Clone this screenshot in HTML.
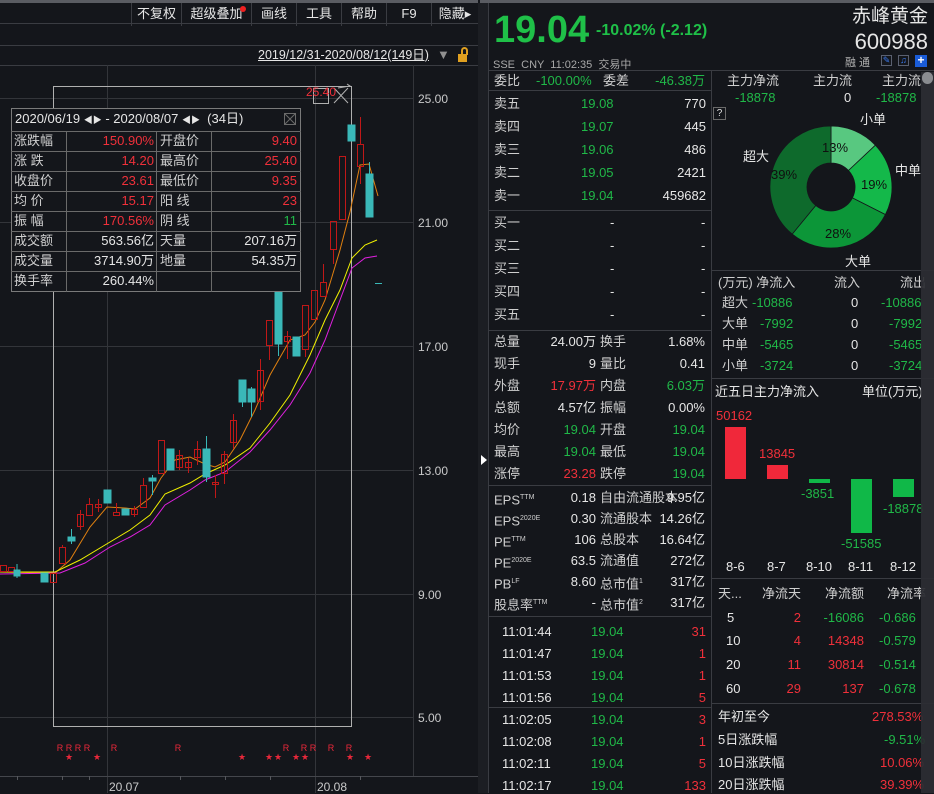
<!DOCTYPE html>
<html><head><meta charset="utf-8"><style>
*{margin:0;padding:0;box-sizing:border-box}
body{width:934px;height:793px;background:#14161b;overflow:hidden;position:relative;font-family:"Liberation Sans","Noto Sans CJK SC",sans-serif;font-size:13px;color:#dcdcdc}
.t{position:absolute;white-space:nowrap;line-height:16px}
.r{text-align:right}
.g{color:#20b848}.d{color:#f0303a}.w{color:#e6e6e6}.l{color:#cfcfcf}
.hl{position:absolute;height:1px;background:#3a3c42}
.vl{position:absolute;width:1px;background:#3a3c42}
.tb{position:absolute;top:4px;height:23px;border-left:1px solid #3a3c42;color:#e6e6e6;font-size:13px;line-height:22px;text-align:center}
</style></head><body>
<div style="position:absolute;left:0;top:0;width:478px;height:3px;background:#5a5c62"></div>
<div style="position:absolute;left:480px;top:0;width:454px;height:3px;background:#5a5c62"></div>
<div class="tb" style="left:131px;width:50px;top:3px">不复权</div>
<div class="tb" style="left:181px;width:70px;top:3px">超级叠加<span style="position:absolute;right:5px;top:3px;width:6px;height:6px;border-radius:3px;background:#f02020"></span></div>
<div class="tb" style="left:251px;width:45px;top:3px">画线</div>
<div class="tb" style="left:296px;width:45px;top:3px">工具</div>
<div class="tb" style="left:341px;width:45px;top:3px">帮助</div>
<div class="tb" style="left:386px;width:45px;top:3px">F9</div>
<div class="tb" style="left:431px;width:47px;top:3px">隐藏▸</div>
<div class="hl" style="left:0;top:23px;width:478px"></div>
<div class="hl" style="left:0;top:45px;width:478px"></div>
<div class="hl" style="left:0;top:65px;width:478px"></div>
<div class="t w" style="left:258px;top:47px;font-size:12.5px;text-decoration:underline">2019/12/31-2020/08/12(149日)</div>
<div class="t" style="left:437px;top:47px;color:#909090">▼</div>
<div style="position:absolute;left:458px;top:54px;width:9px;height:8px;background:#e0a020"></div>
<div style="position:absolute;left:461px;top:47px;width:7px;height:8px;border:2px solid #e0a020;border-bottom:none;border-radius:4px 4px 0 0"></div>
<svg style="position:absolute;left:0;top:0" width="488" height="793">
<g stroke="#33353a" stroke-width="1">
<line x1="0" y1="98.5" x2="413" y2="98.5"/><line x1="0" y1="222.5" x2="413" y2="222.5"/>
<line x1="0" y1="346.5" x2="413" y2="346.5"/><line x1="0" y1="470.5" x2="413" y2="470.5"/>
<line x1="0" y1="594.5" x2="413" y2="594.5"/><line x1="0" y1="717.5" x2="413" y2="717.5"/>
<line x1="107.5" y1="65" x2="107.5" y2="793"/><line x1="315.5" y1="65" x2="315.5" y2="793"/>
<line x1="413.5" y1="65" x2="413.5" y2="776"/>
</g>
<line x1="0" y1="776.5" x2="478" y2="776.5" stroke="#44464c"/>
<g stroke="#55575c"><line x1="17.5" y1="776" x2="17.5" y2="780"/><line x1="62.5" y1="776" x2="62.5" y2="780"/><line x1="89.5" y1="776" x2="89.5" y2="780"/><line x1="180.5" y1="776" x2="180.5" y2="780"/><line x1="225.5" y1="776" x2="225.5" y2="780"/><line x1="270.5" y1="776" x2="270.5" y2="780"/><line x1="360.5" y1="776" x2="360.5" y2="780"/></g>
<rect x="478" y="3" width="10" height="790" fill="#1c1e23"/>
<polygon points="481,455 487,460 481,465" fill="#ffffff"/>
<rect x="53.5" y="86.5" width="298" height="640" fill="none" stroke="#b0b0b0"/>
<rect x="313.5" y="88.5" width="15" height="15" fill="none" stroke="#b0b0b0"/>
<path d="M334 88 L348 103 M348 88 L334 103 M338 88 L350 86 L347 84" stroke="#b0b0b0" fill="none"/>
<text x="306" y="96" fill="#f0303a" font-size="12" font-family="Liberation Sans">25.40</text>
<polyline fill="none" stroke="#e08010" stroke-width="1" points="0,572 55,573 70,560 90,527 107,507 125,508 135,509 150,498 161,478 175,460 190,457 205,464 215,467 225,462 240,440 255,410 270,375 290,340 305,335 315,322 325,300 340,250 350,212 360,165 369,164 378,196"/>
<polyline fill="none" stroke="#f0f000" stroke-width="1" points="0,572 55,572 80,560 110,542 130,530 150,515 165,494 190,483 205,474 225,465 250,448 270,423 290,395 310,355 325,320 340,290 352,258 365,245 377,240"/>
<polyline fill="none" stroke="#e020e0" stroke-width="1" points="0,574 60,573 85,563 110,547 130,537 150,525 165,505 190,490 205,480 225,472 250,452 270,430 290,405 310,373 325,340 340,300 352,268 365,258 377,256"/>
<g stroke="#c01818" fill="none">
<rect x="0.5" y="565.5" width="6" height="6"/><rect x="8.5" y="567.5" width="6" height="4"/>
<rect x="50.5" y="573.5" width="6" height="9"/>
<rect x="59.5" y="547.5" width="6" height="16"/><line x1="62.5" y1="545" x2="62.5" y2="547"/>
<rect x="77.5" y="514.5" width="6" height="12"/><line x1="80.5" y1="510" x2="80.5" y2="530"/>
<rect x="86.5" y="504.5" width="6" height="11"/><line x1="89.5" y1="498" x2="89.5" y2="504"/>
<rect x="95.5" y="504.5" width="6" height="3"/><line x1="98.5" y1="499" x2="98.5" y2="512"/>
<rect x="113.5" y="512.5" width="6" height="3"/><line x1="116.5" y1="503" x2="116.5" y2="512"/>
<rect x="131.5" y="509.5" width="6" height="5"/><line x1="134.5" y1="506" x2="134.5" y2="517"/>
<rect x="140.5" y="485.5" width="6" height="22"/><line x1="143.5" y1="478" x2="143.5" y2="485"/>
<rect x="158.5" y="440.5" width="6" height="33"/>
<rect x="176.5" y="455.5" width="6" height="12"/><line x1="179.5" y1="450" x2="179.5" y2="470"/>
<rect x="185.5" y="462.5" width="6" height="5"/><line x1="188.5" y1="458" x2="188.5" y2="473"/>
<rect x="194.5" y="449.5" width="6" height="8"/><line x1="197.5" y1="441" x2="197.5" y2="465"/>
<rect x="212.5" y="482.5" width="6" height="2"/><line x1="215.5" y1="475" x2="215.5" y2="498"/>
<rect x="221.5" y="454.5" width="6" height="19"/><line x1="224.5" y1="451" x2="224.5" y2="484"/>
<rect x="230.5" y="420.5" width="6" height="22"/><line x1="233.5" y1="414" x2="233.5" y2="449"/>
<rect x="257.5" y="370.5" width="6" height="31"/><line x1="260.5" y1="359" x2="260.5" y2="410"/>
<rect x="266.5" y="320.5" width="6" height="25"/><line x1="269.5" y1="345" x2="269.5" y2="360"/>
<rect x="284.5" y="336.5" width="6" height="5"/><line x1="287.5" y1="331" x2="287.5" y2="359"/>
<rect x="302.5" y="305.5" width="6" height="44"/><line x1="305.5" y1="349" x2="305.5" y2="357"/>
<rect x="311.5" y="290.5" width="6" height="29"/>
<rect x="320.5" y="282.5" width="6" height="14"/><line x1="323.5" y1="264" x2="323.5" y2="282"/>
<rect x="330.5" y="221.5" width="6" height="28"/><line x1="333.5" y1="249" x2="333.5" y2="264"/>
<rect x="339.5" y="156.5" width="6" height="63"/>
<rect x="357.5" y="144.5" width="6" height="22"/><line x1="360.5" y1="117" x2="360.5" y2="144"/><line x1="360.5" y1="166" x2="360.5" y2="184"/>
</g>
<g fill="#3ab8b8" stroke="#3ab8b8">
<rect x="14" y="570" width="6" height="6"/><line x1="17" y1="564" x2="17" y2="578"/>
<rect x="41" y="573" width="7" height="9"/>
<rect x="68" y="537" width="7" height="4"/><line x1="71.5" y1="529" x2="71.5" y2="544"/>
<rect x="104" y="490" width="7" height="13"/>
<rect x="122" y="509" width="7" height="6"/>
<rect x="149" y="478" width="7" height="3"/><line x1="152.5" y1="475" x2="152.5" y2="495"/>
<rect x="167" y="449" width="7" height="21"/>
<rect x="203" y="449" width="7" height="28"/><line x1="206.5" y1="436" x2="206.5" y2="482"/>
<rect x="239" y="380" width="7" height="22"/><line x1="242.5" y1="402" x2="242.5" y2="407"/>
<rect x="248" y="389" width="7" height="13"/><line x1="251.5" y1="387" x2="251.5" y2="417"/>
<rect x="275" y="292" width="7" height="52"/><line x1="278.5" y1="344" x2="278.5" y2="356"/>
<rect x="293" y="337" width="7" height="19"/>
<rect x="348" y="125" width="7" height="16"/>
<rect x="366" y="174" width="7" height="43"/><line x1="369.5" y1="162" x2="369.5" y2="174"/>
<line x1="375" y1="283.5" x2="382" y2="283.5"/>
</g>
<g fill="#e8e8e8" font-size="12" font-family="Liberation Sans" fill-opacity="0.85">
<text x="418" y="103">25.00</text><text x="418" y="227">21.00</text><text x="418" y="351">17.00</text>
<text x="418" y="475">13.00</text><text x="418" y="599">9.00</text><text x="418" y="722">5.00</text>
<text x="109" y="791">20.07</text><text x="317" y="791">20.08</text>
</g>
<g fill="#e8283a" font-size="9" font-family="Liberation Sans" text-anchor="middle">
<text x="60" y="751">R</text><text x="69" y="751">R</text><text x="78" y="751">R</text><text x="87" y="751">R</text><text x="114" y="751">R</text><text x="178" y="751">R</text><text x="286" y="751">R</text><text x="304" y="751">R</text><text x="313" y="751">R</text><text x="331" y="751">R</text><text x="349" y="751">R</text>
<text x="69" y="760">★</text><text x="97" y="760">★</text><text x="242" y="760">★</text><text x="269" y="760">★</text><text x="278" y="760">★</text><text x="296" y="760">★</text><text x="305" y="760">★</text><text x="350" y="760">★</text><text x="368" y="760">★</text>
</g>
</svg>
<div style="position:absolute;left:11px;top:108px;width:290px;height:184px;background:#14161b;border:1px solid #7a7a7a"></div>
<svg style="position:absolute;left:11px;top:108px" width="290" height="184"><g stroke="#6a6a6a">
<line x1="0" y1="23.5" x2="290" y2="23.5"/><line x1="0" y1="43.5" x2="290" y2="43.5"/><line x1="0" y1="63.5" x2="290" y2="63.5"/><line x1="0" y1="83.5" x2="290" y2="83.5"/><line x1="0" y1="103.5" x2="290" y2="103.5"/><line x1="0" y1="123.5" x2="290" y2="123.5"/><line x1="0" y1="143.5" x2="290" y2="143.5"/><line x1="0" y1="163.5" x2="290" y2="163.5"/>
<line x1="55.5" y1="23" x2="55.5" y2="184"/><line x1="145.5" y1="23" x2="145.5" y2="184"/><line x1="200.5" y1="23" x2="200.5" y2="184"/>
<rect x="273.5" y="5.5" width="11" height="11" fill="none"/><path d="M274 6 L284 16 M284 6 L274 16"/></g></svg>
<div class="t w" style="left:15px;top:111px">2020/06/19 <span style="font-size:9px">◀▶</span> - 2020/08/07 <span style="font-size:9px">◀▶</span> &nbsp;(34日)</div>
<div class="t l" style="left:14px;top:133px">涨跌幅</div><div class="t r d" style="right:780px;top:133px">150.90%</div><div class="t l" style="left:160px;top:133px">开盘价</div><div class="t r d" style="right:637px;top:133px">9.40</div>
<div class="t l" style="left:14px;top:153px">涨 跌</div><div class="t r d" style="right:780px;top:153px">14.20</div><div class="t l" style="left:160px;top:153px">最高价</div><div class="t r d" style="right:637px;top:153px">25.40</div>
<div class="t l" style="left:14px;top:173px">收盘价</div><div class="t r d" style="right:780px;top:173px">23.61</div><div class="t l" style="left:160px;top:173px">最低价</div><div class="t r d" style="right:637px;top:173px">9.35</div>
<div class="t l" style="left:14px;top:193px">均 价</div><div class="t r d" style="right:780px;top:193px">15.17</div><div class="t l" style="left:160px;top:193px">阳 线</div><div class="t r d" style="right:637px;top:193px">23</div>
<div class="t l" style="left:14px;top:213px">振 幅</div><div class="t r d" style="right:780px;top:213px">170.56%</div><div class="t l" style="left:160px;top:213px">阴 线</div><div class="t r g" style="right:637px;top:213px">11</div>
<div class="t l" style="left:14px;top:233px">成交额</div><div class="t r w" style="right:780px;top:233px">563.56亿</div><div class="t l" style="left:160px;top:233px">天量</div><div class="t r w" style="right:637px;top:233px">207.16万</div>
<div class="t l" style="left:14px;top:253px">成交量</div><div class="t r w" style="right:780px;top:253px">3714.90万</div><div class="t l" style="left:160px;top:253px">地量</div><div class="t r w" style="right:637px;top:253px">54.35万</div>
<div class="t l" style="left:14px;top:273px">换手率</div><div class="t r w" style="right:780px;top:273px">260.44%</div>

<div class="vl" style="left:488px;top:3px;height:790px"></div>
<div class="t g" style="left:494px;top:10px;font-size:38px;line-height:40px;font-weight:bold;color:#1fc048">19.04</div>
<div class="t g" style="left:596px;top:23px;font-size:16px;font-weight:bold;color:#1fc048">-10.02% (-2.12)</div>
<div class="t w" style="right:6px;top:6px;font-size:19px;line-height:22px">赤峰黄金</div>
<div class="t w" style="right:6px;top:30px;font-size:22px;line-height:24px">600988</div>
<div class="t" style="left:493px;top:57px;font-size:11px;color:#a8a8a8">SSE &nbsp;CNY &nbsp;11:02:35 &nbsp;交易中</div>
<div class="t" style="left:845px;top:55px;font-size:11px;color:#b0b0b0">融 通</div>
<div style="position:absolute;left:881px;top:55px;width:11px;height:11px;border:1px solid #5a6070;color:#3a7af0;font-size:9px;line-height:9px;text-align:center">✎</div>
<div style="position:absolute;left:898px;top:55px;width:11px;height:11px;border:1px solid #5a6070;color:#3a7af0;font-size:9px;line-height:9px;text-align:center">♫</div>
<div style="position:absolute;left:915px;top:55px;width:12px;height:12px;background:#1a5cd8;color:#fff;font-size:12px;line-height:11px;text-align:center;font-weight:bold">+</div>
<div class="hl" style="left:488px;top:70px;width:446px"></div>
<div class="vl" style="left:711px;top:70px;height:723px"></div>

<div class="t l" style="left:494px;top:73px">委比</div><div class="t g" style="left:536px;top:73px">-100.00%</div><div class="t l" style="left:603px;top:73px">委差</div><div class="t r g" style="right:229px;top:73px">-46.38万</div>
<div class="hl" style="left:488px;top:90px;width:223px"></div>
<div class="t l" style="left:494px;top:96px">卖五</div><div class="t g" style="left:581px;top:96px">19.08</div><div class="t r w" style="right:228px;top:96px">770</div>
<div class="t l" style="left:494px;top:119px">卖四</div><div class="t g" style="left:581px;top:119px">19.07</div><div class="t r w" style="right:228px;top:119px">445</div>
<div class="t l" style="left:494px;top:142px">卖三</div><div class="t g" style="left:581px;top:142px">19.06</div><div class="t r w" style="right:228px;top:142px">486</div>
<div class="t l" style="left:494px;top:165px">卖二</div><div class="t g" style="left:581px;top:165px">19.05</div><div class="t r w" style="right:228px;top:165px">2421</div>
<div class="t l" style="left:494px;top:188px">卖一</div><div class="t g" style="left:581px;top:188px">19.04</div><div class="t r w" style="right:228px;top:188px">459682</div>
<div class="hl" style="left:488px;top:210px;width:223px"></div>
<div class="t l" style="left:494px;top:215px">买一</div><div class="t w" style="left:610px;top:215px">-</div><div class="t w" style="left:701px;top:215px">-</div>
<div class="t l" style="left:494px;top:238px">买二</div><div class="t w" style="left:610px;top:238px">-</div><div class="t w" style="left:701px;top:238px">-</div>
<div class="t l" style="left:494px;top:261px">买三</div><div class="t w" style="left:610px;top:261px">-</div><div class="t w" style="left:701px;top:261px">-</div>
<div class="t l" style="left:494px;top:284px">买四</div><div class="t w" style="left:610px;top:284px">-</div><div class="t w" style="left:701px;top:284px">-</div>
<div class="t l" style="left:494px;top:307px">买五</div><div class="t w" style="left:610px;top:307px">-</div><div class="t w" style="left:701px;top:307px">-</div>
<div class="hl" style="left:488px;top:330px;width:223px"></div>
<div class="t l" style="left:494px;top:334px">总量</div><div class="t r w" style="right:338px;top:334px">24.00万</div><div class="t l" style="left:600px;top:334px">换手</div><div class="t r w" style="right:229px;top:334px">1.68%</div>
<div class="t l" style="left:494px;top:356px">现手</div><div class="t r w" style="right:338px;top:356px">9</div><div class="t l" style="left:600px;top:356px">量比</div><div class="t r w" style="right:229px;top:356px">0.41</div>
<div class="t l" style="left:494px;top:378px">外盘</div><div class="t r d" style="right:338px;top:378px">17.97万</div><div class="t l" style="left:600px;top:378px">内盘</div><div class="t r g" style="right:229px;top:378px">6.03万</div>
<div class="t l" style="left:494px;top:400px">总额</div><div class="t r w" style="right:338px;top:400px">4.57亿</div><div class="t l" style="left:600px;top:400px">振幅</div><div class="t r w" style="right:229px;top:400px">0.00%</div>
<div class="t l" style="left:494px;top:422px">均价</div><div class="t r g" style="right:338px;top:422px">19.04</div><div class="t l" style="left:600px;top:422px">开盘</div><div class="t r g" style="right:229px;top:422px">19.04</div>
<div class="t l" style="left:494px;top:444px">最高</div><div class="t r g" style="right:338px;top:444px">19.04</div><div class="t l" style="left:600px;top:444px">最低</div><div class="t r g" style="right:229px;top:444px">19.04</div>
<div class="t l" style="left:494px;top:466px">涨停</div><div class="t r d" style="right:338px;top:466px">23.28</div><div class="t l" style="left:600px;top:466px">跌停</div><div class="t r g" style="right:229px;top:466px">19.04</div>
<div class="hl" style="left:488px;top:485px;width:223px"></div>
<div class="t l" style="left:494px;top:490px">EPS<sup style="font-size:7px">TTM</sup></div><div class="t r w" style="right:338px;top:490px">0.18</div><div class="t l" style="left:600px;top:490px">自由流通股本</div><div class="t r w" style="right:229px;top:490px">9.95亿</div>
<div class="t l" style="left:494px;top:511px">EPS<sup style="font-size:7px">2020E</sup></div><div class="t r w" style="right:338px;top:511px">0.30</div><div class="t l" style="left:600px;top:511px">流通股本</div><div class="t r w" style="right:229px;top:511px">14.26亿</div>
<div class="t l" style="left:494px;top:532px">PE<sup style="font-size:7px">TTM</sup></div><div class="t r w" style="right:338px;top:532px">106</div><div class="t l" style="left:600px;top:532px">总股本</div><div class="t r w" style="right:229px;top:532px">16.64亿</div>
<div class="t l" style="left:494px;top:553px">PE<sup style="font-size:7px">2020E</sup></div><div class="t r w" style="right:338px;top:553px">63.5</div><div class="t l" style="left:600px;top:553px">流通值</div><div class="t r w" style="right:229px;top:553px">272亿</div>
<div class="t l" style="left:494px;top:574px">PB<sup style="font-size:7px">LF</sup></div><div class="t r w" style="right:338px;top:574px">8.60</div><div class="t l" style="left:600px;top:574px">总市值<sup style="font-size:7px">1</sup></div><div class="t r w" style="right:229px;top:574px">317亿</div>
<div class="t l" style="left:494px;top:595px">股息率<sup style="font-size:7px">TTM</sup></div><div class="t r w" style="right:338px;top:595px">-</div><div class="t l" style="left:600px;top:595px">总市值<sup style="font-size:7px">2</sup></div><div class="t r w" style="right:229px;top:595px">317亿</div>
<div class="hl" style="left:488px;top:616px;width:223px"></div>
<div class="t w" style="left:502px;top:624px">11:01:44</div><div class="t g" style="left:591px;top:624px">19.04</div><div class="t r d" style="right:228px;top:624px">31</div>
<div class="t w" style="left:502px;top:646px">11:01:47</div><div class="t g" style="left:591px;top:646px">19.04</div><div class="t r d" style="right:228px;top:646px">1</div>
<div class="t w" style="left:502px;top:668px">11:01:53</div><div class="t g" style="left:591px;top:668px">19.04</div><div class="t r d" style="right:228px;top:668px">1</div>
<div class="t w" style="left:502px;top:690px">11:01:56</div><div class="t g" style="left:591px;top:690px">19.04</div><div class="t r d" style="right:228px;top:690px">5</div>
<div class="hl" style="left:488px;top:707px;width:223px"></div>
<div class="t w" style="left:502px;top:712px">11:02:05</div><div class="t g" style="left:591px;top:712px">19.04</div><div class="t r d" style="right:228px;top:712px">3</div>
<div class="t w" style="left:502px;top:734px">11:02:08</div><div class="t g" style="left:591px;top:734px">19.04</div><div class="t r d" style="right:228px;top:734px">1</div>
<div class="t w" style="left:502px;top:756px">11:02:11</div><div class="t g" style="left:591px;top:756px">19.04</div><div class="t r d" style="right:228px;top:756px">5</div>
<div class="t w" style="left:502px;top:778px">11:02:17</div><div class="t g" style="left:591px;top:778px">19.04</div><div class="t r d" style="right:228px;top:778px">133</div>

<div style="position:absolute;left:712px;top:70px;width:222px;height:723px;overflow:hidden">
<div class="t l" style="left:15px;top:3px">主力净流</div><div class="t l" style="left:101px;top:3px">主力流</div><div class="t l" style="left:170px;top:3px">主力流</div>
<div class="t g" style="left:23px;top:20px">-18878</div><div class="t w" style="left:132px;top:20px">0</div><div class="t g" style="left:164px;top:20px">-18878</div>
<div style="position:absolute;left:1px;top:37px;width:13px;height:13px;border:1px solid #6a6a6a;font-size:10px;line-height:11px;text-align:center;color:#ddd">?</div>
<svg style="position:absolute;left:0;top:0" width="222" height="723">
<g transform="translate(119,117)" stroke="#14161b" stroke-width="0.8">
<path d="M0,-61 A61,61 0 0,1 44.4,-41.8 L17.5,-16.5 A24,24 0 0,0 0,-24 Z" fill="#58c880"/>
<path d="M44.4,-41.8 A61,61 0 0,1 54.4,27.6 L21.4,10.9 A24,24 0 0,0 17.5,-16.5 Z" fill="#14b84a"/>
<path d="M54.4,27.6 A61,61 0 0,1 -38.8,47.1 L-15.3,18.5 A24,24 0 0,0 21.4,10.9 Z" fill="#0c9638"/>
<path d="M-38.8,47.1 A61,61 0 0,1 0,-61 L0,-24 A24,24 0 0,0 -15.3,18.5 Z" fill="#0e6a2c"/>
</g>
<g fill="#101010" font-size="13" font-family="Liberation Sans"><text x="110" y="82">13%</text><text x="149" y="119">19%</text><text x="59" y="109">39%</text><text x="113" y="168">28%</text></g>
<rect x="13" y="357" width="21" height="52" fill="#f0283a"/><rect x="55" y="395" width="21" height="14" fill="#f0283a"/>
<rect x="97" y="409" width="21" height="4" fill="#10b848"/><rect x="139" y="409" width="21" height="54" fill="#10b848"/><rect x="181" y="409" width="21" height="18" fill="#10b848"/>
</svg>
<div class="t w" style="left:148px;top:42px">小单</div><div class="t w" style="left:183px;top:93px">中单</div><div class="t w" style="left:31px;top:79px">超大</div><div class="t w" style="left:133px;top:184px">大单</div>
<div class="hl" style="left:0;top:200px;width:222px"></div>
<div class="t l" style="left:6px;top:205px">(万元) 净流入</div><div class="t l" style="left:122px;top:205px">流入</div><div class="t l" style="left:188px;top:205px">流出</div>
<div class="t l" style="left:10px;top:225px">超大</div><div class="t g" style="left:40px;top:225px">-10886</div><div class="t w" style="left:139px;top:225px">0</div><div class="t g" style="left:169px;top:225px">-10886</div>
<div class="t l" style="left:10px;top:246px">大单</div><div class="t g" style="left:48px;top:246px">-7992</div><div class="t w" style="left:139px;top:246px">0</div><div class="t g" style="left:177px;top:246px">-7992</div>
<div class="t l" style="left:10px;top:267px">中单</div><div class="t g" style="left:48px;top:267px">-5465</div><div class="t w" style="left:139px;top:267px">0</div><div class="t g" style="left:177px;top:267px">-5465</div>
<div class="t l" style="left:10px;top:288px">小单</div><div class="t g" style="left:48px;top:288px">-3724</div><div class="t w" style="left:139px;top:288px">0</div><div class="t g" style="left:177px;top:288px">-3724</div>
<div class="hl" style="left:0;top:308px;width:222px"></div>
<div class="t w" style="left:3px;top:314px">近五日主力净流入</div><div class="t w" style="left:150px;top:314px">单位(万元)</div>
<div class="t d" style="left:4px;top:338px">50162</div><div class="t d" style="left:47px;top:376px">13845</div>
<div class="t g" style="left:89px;top:416px">-3851</div><div class="t g" style="left:171px;top:431px">-18878</div><div class="t g" style="left:129px;top:466px">-51585</div>
<div class="t w" style="left:14px;top:489px">8-6</div><div class="t w" style="left:55px;top:489px">8-7</div><div class="t w" style="left:94px;top:489px">8-10</div><div class="t w" style="left:136px;top:489px">8-11</div><div class="t w" style="left:178px;top:489px">8-12</div>
<div class="hl" style="left:0;top:508px;width:222px"></div>
<div class="t l" style="left:6px;top:516px">天...</div><div class="t l" style="left:50px;top:516px">净流天</div><div class="t l" style="left:113px;top:516px">净流额</div><div class="t l" style="left:175px;top:516px">净流率</div>
<div class="t w" style="left:15px;top:540px">5</div><div class="t r d" style="right:133px;top:540px">2</div><div class="t r g" style="right:70px;top:540px">-16086</div><div class="t g" style="left:167px;top:540px">-0.686</div>
<div class="t w" style="left:14px;top:563px">10</div><div class="t r d" style="right:133px;top:563px">4</div><div class="t r d" style="right:70px;top:563px">14348</div><div class="t g" style="left:167px;top:563px">-0.579</div>
<div class="t w" style="left:14px;top:587px">20</div><div class="t r d" style="right:133px;top:587px">11</div><div class="t r d" style="right:70px;top:587px">30814</div><div class="t g" style="left:167px;top:587px">-0.514</div>
<div class="t w" style="left:14px;top:611px">60</div><div class="t r d" style="right:133px;top:611px">29</div><div class="t r d" style="right:70px;top:611px">137</div><div class="t g" style="left:167px;top:611px">-0.678</div>
<div class="hl" style="left:0;top:633px;width:222px"></div>
<div class="t w" style="left:6px;top:639px">年初至今</div><div class="t d" style="left:160px;top:639px">278.53%</div>
<div class="t w" style="left:6px;top:662px">5日涨跌幅</div><div class="t g" style="left:172px;top:662px">-9.51%</div>
<div class="t w" style="left:6px;top:685px">10日涨跌幅</div><div class="t d" style="left:168px;top:685px">10.06%</div>
<div class="t w" style="left:6px;top:707px">20日涨跌幅</div><div class="t d" style="left:168px;top:707px">39.39%</div>
</div>
<div style="position:absolute;left:921px;top:72px;width:13px;height:721px;background:#2c2e33;opacity:0.92;z-index:5"></div>
<div style="position:absolute;left:922px;top:72px;width:11px;height:12px;border-radius:6px;background:#8a8c90;z-index:6"></div>
</body></html>
